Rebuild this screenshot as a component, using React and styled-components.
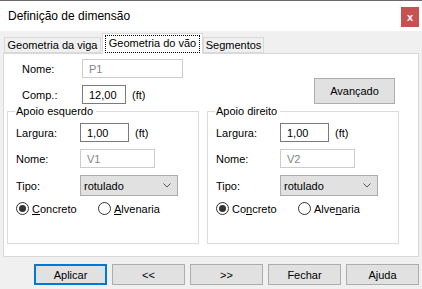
import React from 'react';
import styled, { createGlobalStyle } from 'styled-components';

const GlobalStyle = createGlobalStyle`
  html, body {
    margin: 0;
    padding: 0;
    background: #f0f0f0;
  }
  * {
    box-sizing: border-box;
  }
`;

const Window = styled.div`
  width: 422px;
  height: 289px;
  border-top: 1px solid #6b6b6b;
  background: #f0f0f0;
  font-family: "Liberation Sans", Arial, sans-serif;
  font-size: 11px;
  color: #000;
  overflow: hidden;
`;

const TitleBar = styled.div`
  height: 30px;
  background: #fff;
  display: flex;
  justify-content: space-between;
  padding-left: 8px;
`;

const Title = styled.div`
  font-size: 12px;
  line-height: 30px;
`;

const CloseButton = styled.div`
  width: 18px;
  height: 20px;
  margin-top: 6px;
  margin-right: 3px;
  background: #c75050;
  color: #fff;
  font-weight: bold;
  font-size: 11px;
  display: flex;
  align-items: center;
  justify-content: center;
`;

const Body = styled.div`
  padding: 0 3px;
`;

const TabRow = styled.div`
  height: 22px;
  display: flex;
  align-items: flex-end;
  padding-left: 1px;
`;

const Tab = styled.div`
  position: relative;
  width: ${p => p.width}px;
  height: ${p => (p.active ? 21 : 16)}px;
  margin-left: ${p => p.offset || 0}px;
  margin-bottom: ${p => (p.active ? -1 : 0)}px;
  z-index: ${p => (p.active ? 1 : 0)};
  background: ${p => (p.active ? '#fff' : '#f0f0f0')};
  border: 1px solid #d9d9d9;
  border-bottom: ${p => (p.active ? 'none' : '1px solid #d9d9d9')};
  display: flex;
  justify-content: center;
  align-items: ${p => (p.active ? 'flex-start' : 'center')};
  padding-top: ${p => (p.active ? 1 : 0)}px;
  white-space: nowrap;
`;

const FocusText = styled.span`
  border: 1px dotted #000;
  padding: 1px 3px 2px;
  line-height: 13px;
`;

const Panel = styled.div`
  height: 204px;
  background: #fff;
  border: 1px solid #d9d9d9;
`;

const TopSection = styled.div`
  display: flex;
  justify-content: space-between;
  height: 50px;
`;

const Fields = styled.div`
  display: flex;
  flex-direction: column;
  gap: 7px;
  padding-top: ${p => p.top || 0}px;
  padding-left: ${p => p.left || 0}px;
`;

const Row = styled.div`
  display: flex;
  align-items: center;
`;

const Label = styled.div`
  width: ${p => p.width}px;
`;

const TextBox = styled.div`
  width: ${p => p.width}px;
  height: 19px;
  border: 1px solid ${p => (p.disabled ? '#cccccc' : '#7a7a7a')};
  color: ${p => (p.disabled ? '#838383' : '#000')};
  background: #fff;
  padding-left: 6px;
  display: flex;
  align-items: center;
`;

const Unit = styled.span`
  margin-left: 6px;
`;

const Button = styled.div`
  width: ${p => p.width}px;
  height: ${p => p.height}px;
  background: #e1e1e1;
  border: ${p => (p.primary ? '2px solid #0078d7' : '1px solid #adadad')};
  display: flex;
  align-items: center;
  justify-content: center;
`;

const AdvancedButton = styled(Button)`
  margin-top: 24px;
  margin-right: 23px;
`;

const GroupRow = styled.div`
  display: flex;
  gap: 8px;
  padding-left: 3px;
`;

const Group = styled.fieldset`
  width: 192px;
  height: 140px;
  margin: 0;
  border: 1px solid #dcdcdc;
  padding: 5px 8px 0;
  min-width: 0;
`;

const Legend = styled.legend`
  padding: 0 3px 0 1px;
  margin-left: -1px;
  line-height: 14px;
`;

const Select = styled.div`
  width: 98px;
  height: 21px;
  background: #e1e1e1;
  border: 1px solid #adadad;
  padding: 0 6px 0 3px;
  display: flex;
  align-items: center;
  justify-content: space-between;
`;

const RadioRow = styled.div`
  display: flex;
  align-items: center;
  height: 13px;
  margin-top: -1px;
`;

const RadioItem = styled.div`
  display: flex;
  align-items: center;
  gap: 3px;
  width: ${p => (p.width ? `${p.width}px` : 'auto')};
`;

const RadioCircle = styled.span`
  width: 13px;
  height: 13px;
  border-radius: 50%;
  border: 1px solid #333;
  display: flex;
  align-items: center;
  justify-content: center;
  &::after {
    content: '';
    width: 7px;
    height: 7px;
    border-radius: 50%;
    background: ${p => (p.checked ? '#333' : 'transparent')};
  }
`;

const Key = styled.span`
  text-decoration: underline;
`;

const Footer = styled.div`
  display: flex;
  justify-content: flex-end;
  gap: 5px;
  margin-top: 7px;
`;

const Chevron = () => (
  <svg width="8" height="5" viewBox="0 0 8 5">
    <path d="M0.5 0.5 L4 4 L7.5 0.5" fill="none" stroke="#555" strokeWidth="1" />
  </svg>
);

const Support = ({ title, name, concreto, alvenaria }) => (
  <Group>
    <Legend>{title}</Legend>
    <Fields>
      <Row>
        <Label width={64}>Largura:</Label>
        <TextBox width={49}>1,00</TextBox>
        <Unit>(ft)</Unit>
      </Row>
      <Row>
        <Label width={64}>Nome:</Label>
        <TextBox width={75} disabled>{name}</TextBox>
      </Row>
      <Row>
        <Label width={64}>Tipo:</Label>
        <Select>
          <span>rotulado</span>
          <Chevron />
        </Select>
      </Row>
      <RadioRow>
        <RadioItem width={82}>
          <RadioCircle checked />
          <span>{concreto}</span>
        </RadioItem>
        <RadioItem>
          <RadioCircle />
          <span>{alvenaria}</span>
        </RadioItem>
      </RadioRow>
    </Fields>
  </Group>
);

export default function App() {
  return (
    <>
      <GlobalStyle />
      <Window>
        <TitleBar>
          <Title>Definição de dimensão</Title>
          <CloseButton>x</CloseButton>
        </TitleBar>
        <Body>
          <TabRow>
            <Tab width={97}>Geometria da viga</Tab>
            <Tab width={101} offset={1} active>
              <FocusText>Geometria do vão</FocusText>
            </Tab>
            <Tab width={61}>Segmentos</Tab>
          </TabRow>
          <Panel>
            <TopSection>
              <Fields top={5} left={18}>
                <Row>
                  <Label width={60}>Nome:</Label>
                  <TextBox width={101} disabled>P1</TextBox>
                </Row>
                <Row>
                  <Label width={60}>Comp.:</Label>
                  <TextBox width={44}>12,00</TextBox>
                  <Unit>(ft)</Unit>
                </Row>
              </Fields>
              <AdvancedButton width={81} height={26}>Avançado</AdvancedButton>
            </TopSection>
            <GroupRow>
              <Support
                title="Apoio esquerdo"
                name="V1"
                concreto={<><Key>C</Key>oncreto</>}
                alvenaria={<><Key>A</Key>lvenaria</>}
              />
              <Support
                title="Apoio direito"
                name="V2"
                concreto={<>Co<Key>n</Key>creto</>}
                alvenaria={<>Alve<Key>n</Key>aria</>}
              />
            </GroupRow>
          </Panel>
          <Footer>
            <Button width={73} height={21} primary>Aplicar</Button>
            <Button width={73} height={21}>&lt;&lt;</Button>
            <Button width={73} height={21}>&gt;&gt;</Button>
            <Button width={73} height={21}>Fechar</Button>
            <Button width={73} height={21}>Ajuda</Button>
          </Footer>
        </Body>
      </Window>
    </>
  );
}
